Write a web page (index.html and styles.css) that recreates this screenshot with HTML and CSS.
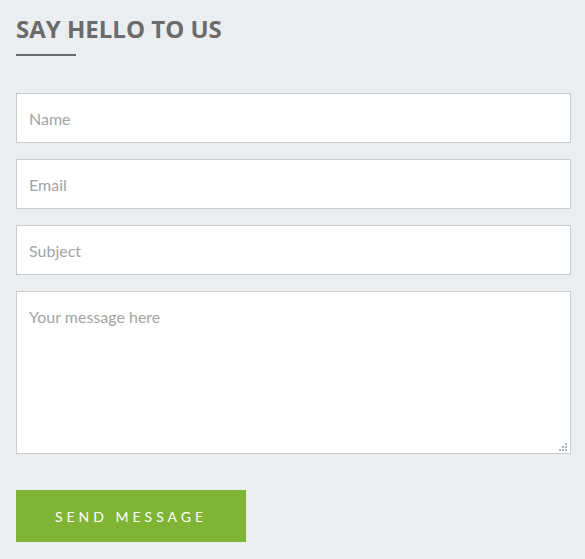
FILE: index.html
```html
<!DOCTYPE html>
<html>
<head>
<meta charset="utf-8">
<link rel="stylesheet" href="styles.css">
</head>
<body>
<section class="contact">
  <h2 class="title">SAY HELLO TO US</h2>
  <div class="rule"></div>
  <form class="form">
    <input class="field" type="text" placeholder="Name">
    <input class="field" type="text" placeholder="Email">
    <input class="field" type="text" placeholder="Subject">
    <div class="area-wrap">
      <textarea class="field area" placeholder="Your message here"></textarea>
      <svg class="grip" width="8" height="8" viewBox="0 0 8 8" aria-hidden="true">
        <rect x="6" y="0" width="2" height="2"/>
        <rect x="3" y="3" width="2" height="2"/>
        <rect x="6" y="3" width="2" height="2"/>
        <rect x="0" y="6" width="2" height="2"/>
        <rect x="3" y="6" width="2" height="2"/>
        <rect x="6" y="6" width="2" height="2"/>
      </svg>
    </div>
    <button class="send" type="button">SEND MESSAGE</button>
  </form>
</section>
</body>
</html>
```
FILE: styles.css
```css
html, body {
  margin: 0;
  padding: 0;
  background: #eaeef1;
}
.contact {
  padding: 14px 14px 0 16px;
}
.title {
  margin: 0;
  font-family: "Open Sans", sans-serif;
  font-weight: 700;
  font-size: 24px;
  line-height: 30px;
  color: #6b6b6b;
}
.rule {
  width: 60px;
  height: 2px;
  background: #6b6b6b;
  margin-top: 10px;
}
.form {
  display: flex;
  flex-direction: column;
  align-items: flex-start;
  gap: 16px;
  margin-top: 37px;
}
.field {
  box-sizing: border-box;
  width: 555px;
  height: 50px;
  margin: 0;
  border: 1px solid #cccccc;
  background: #fff;
  padding: 0 12px;
  font-family: Lato, sans-serif;
  font-size: 16px;
  color: #555;
  outline: none;
}
.field::placeholder {
  color: #a4a4a4;
}
.area-wrap {
  position: relative;
  width: 555px;
  height: 163px;
}
.area {
  height: 163px;
  padding: 15px 12px;
  resize: none;
  display: block;
}
.grip {
  position: absolute;
  right: 4px;
  bottom: 3px;
  fill: #b0b0b0;
}
.send {
  margin-top: 20px;
  width: 230px;
  height: 52px;
  border: none;
  background: #80b435;
  color: #fff;
  font-family: Lato, sans-serif;
  font-size: 14px;
  letter-spacing: 4px;
  padding: 0;
  cursor: pointer;
}
```
